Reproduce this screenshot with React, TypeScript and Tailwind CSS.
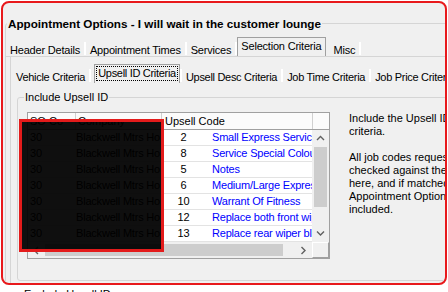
import React from 'react';

const rows = [
  { code: '2', desc: 'Small Express Service' },
  { code: '8', desc: 'Service Special Colour' },
  { code: '5', desc: 'Notes' },
  { code: '6', desc: 'Medium/Large Express Service' },
  { code: '10', desc: 'Warrant Of Fitness' },
  { code: '12', desc: 'Replace both front wipers' },
  { code: '13', desc: 'Replace rear wiper blade' },
];

function Sep() {
  return <div className="w-[2px] h-[13px] mb-[1px] border-l border-[#a0a0a0] border-r border-white shrink-0" />;
}

function Tab({ label, active, focus }: { label: string; active?: boolean; focus?: boolean }) {
  if (active) {
    return (
      <div className="h-[19px] px-[2px] pt-[2px] border-l border-t border-r border-[#a0a0a0] shrink-0">
        <div className={`px-[1px] leading-[13px] whitespace-nowrap ${focus ? 'outline outline-1 outline-dotted outline-black' : ''}`}>
          {label}
        </div>
      </div>
    );
  }
  return <div className="h-[12px] leading-[12px] px-[4px] whitespace-nowrap shrink-0">{label}</div>;
}

function Chevron({ dir }: { dir: 'up' | 'down' | 'left' | 'right' }) {
  const pts = {
    up: '1,5 4.5,1.5 8,5',
    down: '1,1.5 4.5,5 8,1.5',
    left: '5,1 1.5,4.5 5,8',
    right: '1.5,1 5,4.5 1.5,8',
  }[dir];
  const vertical = dir === 'up' || dir === 'down';
  return (
    <svg width={vertical ? 9 : 7} height={vertical ? 7 : 9} viewBox={vertical ? '0 0 9 7' : '0 0 7 9'}>
      <polyline points={pts} fill="none" stroke="#606060" strokeWidth="1.4" />
    </svg>
  );
}

export default function App() {
  return (
    <div className="w-[448px] h-[292px] bg-white overflow-hidden font-['Liberation_Sans',Arial,sans-serif] text-[11px] text-black">
      <div className="ml-[1px] mt-[1px] w-[446px] h-[284px] border-2 border-[#e8191c] rounded-[8px] bg-[#f0f0f0] overflow-hidden">
        <fieldset className="ml-[2px] mt-[14px] w-[446px] h-[300px] border border-[#d5d5d5] rounded-[3px]">
          <legend className="ml-[1px] px-[1px] font-bold text-[11.7px] leading-[13px]">
            Appointment Options - I will wait in the customer lounge
          </legend>

          {/* first tab strip */}
          <div className="mt-[7px] h-[20px] flex items-end border-b border-[#d5d5d5] tracking-[-0.2px]">
            <Tab label="Header Details" />
            <Sep />
            <Tab label="Appointment Times" />
            <Sep />
            <Tab label="Services" />
            <Sep />
            <Tab label="Selection Criteria" active />
            <div className="w-[4px]" />
            <Tab label="Misc" />
            <Sep />
          </div>

          {/* selection criteria page */}
          <div className="ml-[4px] h-[260px] border-l border-[#d5d5d5]">
            <div className="pt-[5px] h-[26px] flex items-end tracking-[-0.3px]">
              <div className="w-[1px]" />
              <Tab label="Vehicle Criteria" />
              <Sep />
              <div className="w-[3px]" />
              <Tab label="Upsell ID Criteria" active focus />
              <Sep />
              <Tab label="Upsell Desc Criteria" />
              <Sep />
              <Tab label="Job Time Criteria" />
              <Sep />
              <Tab label="Job Price Criteria" />
            </div>

            <fieldset className="ml-[6px] mt-[8px] w-[440px] h-[190px] border border-[#d5d5d5] rounded-[3px]">
              <legend className="ml-[6px] px-[1px] leading-[13px]">Include Upsell ID</legend>

              <div className="mt-[8px] ml-[9px] flex items-start">
                <div className="relative w-[303px] h-[147px] border border-[#a0a0a0] bg-white shrink-0">
                  {/* header */}
                  <div className="flex h-[17px] border-b border-[#a0a0a0] bg-[#fbfbfb] leading-[16px]">
                    <div className="w-[48px] px-[2px] border-r border-[#d0d0d0] overflow-hidden whitespace-nowrap">SO Co</div>
                    <div className="w-[86px] px-[2px] border-r border-[#d0d0d0] overflow-hidden whitespace-nowrap">Company</div>
                    <div className="w-[150px] px-[3px] whitespace-nowrap">Upsell Code</div>
                    <div className="flex-1 border-l border-[#d0d0d0]" />
                  </div>

                  <div className="flex h-[112px]">
                    <div className="w-[284px] tracking-[-0.2px]">
                      {rows.map((r) => (
                        <div key={r.code} className="flex h-[16px] leading-[15px] border-b border-[#e3e3e3] whitespace-nowrap overflow-hidden">
                          <div className="w-[48px] px-[2px] shrink-0">30</div>
                          <div className="w-[86px] overflow-hidden shrink-0">Blackwell Mtrs Ho</div>
                          <div className="w-[43px] text-center shrink-0">{r.code}</div>
                          <div className="w-[107px] pl-[7px] overflow-hidden shrink-0 text-[#0000ff]">{r.desc}</div>
                        </div>
                      ))}
                    </div>
                    {/* vertical scrollbar */}
                    <div className="w-[17px] flex flex-col bg-[#f0f0f0]">
                      <div className="h-[17px] flex items-center justify-center"><Chevron dir="up" /></div>
                      <div className="h-[60px] mx-[2px] bg-[#cdcdcd]" />
                      <div className="flex-1" />
                      <div className="h-[17px] flex items-center justify-center"><Chevron dir="down" /></div>
                    </div>
                  </div>

                  {/* horizontal scrollbar */}
                  <div className="flex h-[16px] bg-[#f0f0f0]">
                    <div className="w-[17px] flex items-center justify-center"><Chevron dir="left" /></div>
                    <div className="w-[238px] my-[2px] bg-[#cdcdcd]" />
                    <div className="flex-1" />
                    <div className="w-[17px] flex items-center justify-center"><Chevron dir="right" /></div>
                    <div className="w-[17px] border-l border-t border-white border-r border-b border-r-[#a0a0a0] border-b-[#a0a0a0]" />
                  </div>

                  {/* redaction box */}
                  <div className="absolute left-[-9px] top-[6px] w-[145px] h-[133px] border-[3px] border-[#e31b1b] bg-black/[0.94]" />
                </div>

                <div className="ml-[19px] leading-[13px] whitespace-nowrap shrink-0">
                  <div>Include the Upsell IDs listed in this</div>
                  <div>criteria.</div>
                  <div className="h-[13px]" />
                  <div>All job codes requested by the customer are</div>
                  <div>checked against the Upsell IDs listed</div>
                  <div>here, and if matched, this</div>
                  <div>Appointment Option will be</div>
                  <div>included.</div>
                </div>
              </div>
            </fieldset>
          </div>
        </fieldset>
      </div>
      <div className="ml-[24px] mt-[3px] leading-[13px]">Exclude Upsell ID</div>
    </div>
  );
}
